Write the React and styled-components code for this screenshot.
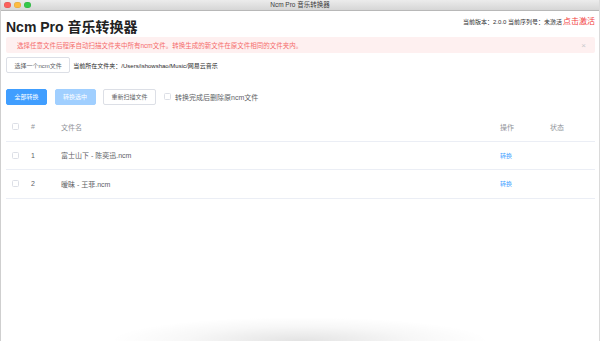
import React from "react";
import styled, { createGlobalStyle } from "styled-components";

const GlobalStyle = createGlobalStyle`
  html, body {
    margin: 0;
    padding: 0;
    background: #fff;
  }
  body {
    font-family: "Helvetica Neue", "Liberation Sans", "Noto Sans CJK SC", sans-serif;
    -webkit-font-smoothing: antialiased;
  }
`;

const Window = styled.div`
  width: 600px;
  height: 341px;
  box-sizing: border-box;
  display: flex;
  flex-direction: column;
  background: #fff;
  border-left: 1px solid #cfcfcf;
  border-right: 1px solid #dadada;
  overflow: hidden;
`;

const TitleBar = styled.div`
  height: 10px;
  flex: none;
  display: grid;
  grid-template-columns: 1fr auto 1fr;
  align-items: center;
  background: linear-gradient(#ececec, #d6d6d6);
  border-bottom: 1px solid #b8b8b8;
`;

const Lights = styled.div`
  display: flex;
  gap: 3.5px;
  padding-left: 3px;
`;

const Light = styled.span`
  width: 6.5px;
  height: 6.5px;
  border-radius: 50%;
  background: ${(p) => p.color};
  box-shadow: inset 0 0 0 0.5px rgba(0, 0, 0, 0.12);
`;

const WindowTitle = styled.div`
  font-size: 6.5px;
  line-height: 10px;
  color: #3c3c3c;
`;

const Content = styled.div`
  flex: 1;
  padding: 0 4px 0 5px;
`;

const Header = styled.div`
  display: flex;
  justify-content: space-between;
  align-items: flex-start;
  padding-top: 6px;
`;

const Heading = styled.h1`
  margin: 0;
  font-size: 14px;
  line-height: 20px;
  font-weight: 700;
  color: #222;
`;

const Info = styled.div`
  display: flex;
  align-items: baseline;
  font-size: 6px;
  line-height: 9px;
  color: #303133;
`;

const Activate = styled.span`
  font-size: 8px;
  color: #f23c3c;
  margin-left: 1px;
`;

const Alert = styled.div`
  height: 16px;
  display: flex;
  align-items: center;
  justify-content: space-between;
  padding: 0 9px 0 11px;
  background: #fef0f0;
  border-radius: 2px;
  color: #f56c6c;
  font-size: 6.5px;
`;

const Close = styled.span`
  font-size: 8px;
  color: #c8c9cc;
`;

const Row = styled.div`
  display: flex;
  align-items: center;
  gap: ${(p) => p.gap || 0}px;
  margin-top: ${(p) => p.top}px;
`;

const Button = styled.button`
  height: 16px;
  box-sizing: border-box;
  padding: 0 7.5px;
  font-family: inherit;
  font-size: 6px;
  border-radius: 2px;
  border: 1px solid ${(p) => (p.kind === "primary" ? "#409eff" : p.kind === "disabled" ? "#a0cfff" : "#dcdfe6")};
  background: ${(p) => (p.kind === "primary" ? "#409eff" : p.kind === "disabled" ? "#a0cfff" : "#fff")};
  color: ${(p) => (p.kind ? "#fff" : "#606266")};
  white-space: nowrap;
`;

const FolderText = styled.span`
  font-size: 6px;
  color: #2a2a2a;
`;

const Check = styled.span`
  display: inline-block;
  width: 7px;
  height: 7px;
  box-sizing: border-box;
  border: 1px solid #dcdfe6;
  border-radius: 1.5px;
  background: #fff;
`;

const CheckLabel = styled.label`
  display: flex;
  align-items: center;
  gap: 4px;
  margin-left: 0.5px;
  font-size: 7px;
  color: #606266;
`;

const Table = styled.div`
  margin-top: 8px;
`;

const TableRow = styled.div`
  display: grid;
  grid-template-columns: 20px 30px 1fr 50px 50px;
  align-items: center;
  height: ${(p) => (p.head ? 28 : 27.5)}px;
  border-bottom: 1px solid #ebeef5;
  font-size: 7px;
  color: ${(p) => (p.head ? "#909399" : "#606266")};
`;

const Cell = styled.div`
  padding-left: ${(p) => (p.first ? 6 : 5)}px;
  display: flex;
  align-items: center;
  white-space: nowrap;
`;

const Link = styled.span`
  font-size: 6px;
  color: #409eff;
`;

const Shade = styled.div`
  flex: none;
  align-self: center;
  width: 380px;
  height: 24px;
  background: radial-gradient(ellipse 50% 100% at 50% 100%, rgba(0, 0, 0, 0.11), rgba(0, 0, 0, 0.03) 60%, rgba(0, 0, 0, 0) 100%);
`;

const files = [
  { id: 1, name: "富士山下 - 陈奕迅.ncm" },
  { id: 2, name: "暧昧 - 王菲.ncm" },
];

export default function App() {
  return (
    <>
      <GlobalStyle />
      <Window>
        <TitleBar>
          <Lights>
            <Light color="#fc605c" />
            <Light color="#fdbc40" />
            <Light color="#34c84a" />
          </Lights>
          <WindowTitle>Ncm Pro 音乐转换器</WindowTitle>
          <div />
        </TitleBar>
        <Content>
          <Header>
            <Heading>Ncm Pro 音乐转换器</Heading>
            <Info>
              当前版本：2.0.0 当前序列号：未激活
              <Activate>点击激活</Activate>
            </Info>
          </Header>
          <Alert>
            <span>选择任意文件后程序自动扫描文件夹中所有ncm文件。转换生成的新文件在原文件相同的文件夹内。</span>
            <Close>×</Close>
          </Alert>
          <Row top={4} gap={3}>
            <Button>选择一个ncm文件</Button>
            <FolderText>当前所在文件夹：/Users/ishowshao/Music/网易云音乐</FolderText>
          </Row>
          <Row top={15.5} gap={7.5}>
            <Button kind="primary">全部转换</Button>
            <Button kind="disabled">转换选中</Button>
            <Button>重新扫描文件</Button>
            <CheckLabel>
              <Check />
              转换完成后删除原ncm文件
            </CheckLabel>
          </Row>
          <Table>
            <TableRow head>
              <Cell first>
                <Check />
              </Cell>
              <Cell>#</Cell>
              <Cell>文件名</Cell>
              <Cell>操作</Cell>
              <Cell>状态</Cell>
            </TableRow>
            {files.map((f) => (
              <TableRow key={f.id}>
                <Cell first>
                  <Check />
                </Cell>
                <Cell>{f.id}</Cell>
                <Cell>{f.name}</Cell>
                <Cell>
                  <Link>转换</Link>
                </Cell>
                <Cell />
              </TableRow>
            ))}
          </Table>
        </Content>
        <Shade />
      </Window>
    </>
  );
}
